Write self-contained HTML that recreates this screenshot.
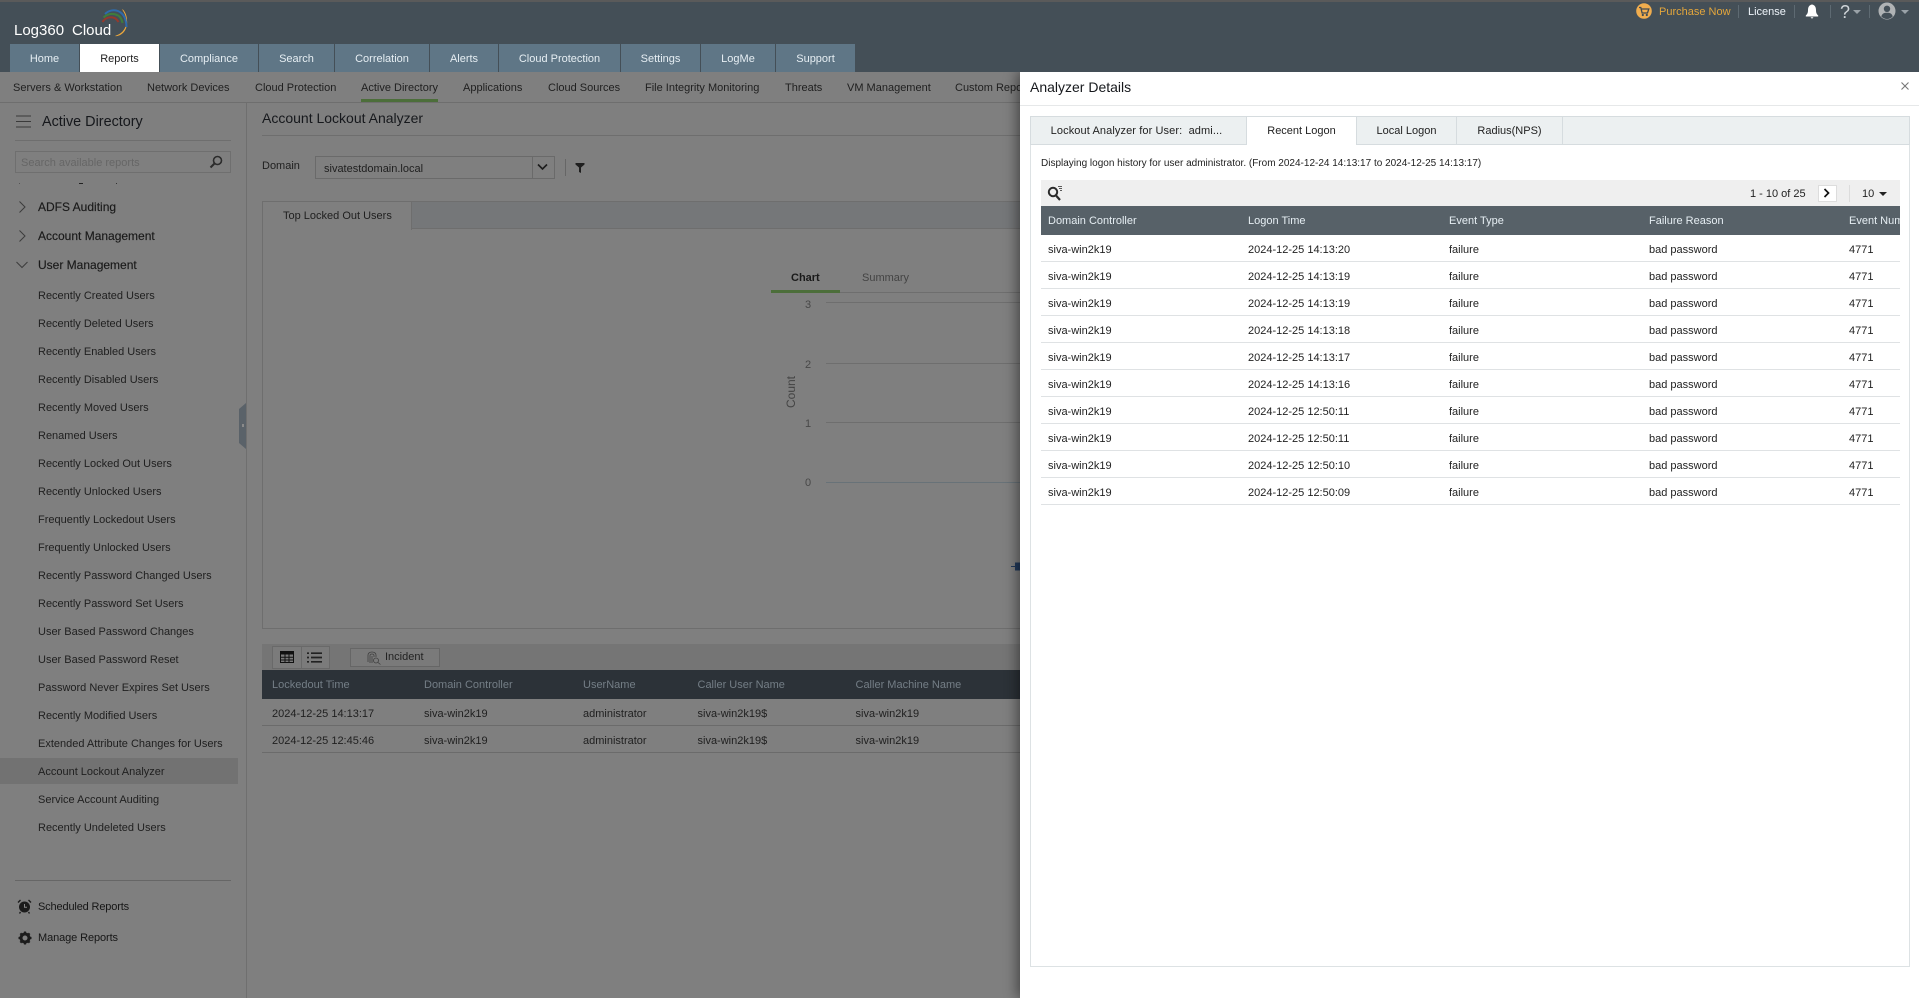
<!DOCTYPE html>
<html><head><meta charset="utf-8"><title>Account Lockout Analyzer</title>
<style>
html,body{margin:0;padding:0;width:1919px;height:998px;overflow:hidden;background:#7f7f7f;font-family:"Liberation Sans",sans-serif;font-size:11px;color:#1f1f1f}
.a{position:absolute}
.t{position:absolute;white-space:nowrap;line-height:14px}
.tab{position:absolute;top:44px;height:28px;line-height:30px;background:#5f7686;color:#e6eef3;text-align:center;font-size:11px}
.sub{top:81px}
.m{left:38px;font-size:11px;color:#202020}
.g{left:38px;font-size:12px;color:#1a1a1a;-webkit-text-stroke:.15px #1a1a1a}
.h{top:678px;color:#747e86}
.r{position:absolute;left:1041px;width:859px;height:26px;border-bottom:1px solid #dfe2e4;line-height:31px;color:#222}
.r span{position:absolute;top:0;white-space:nowrap}
.c1{left:7px}.c2{left:207px}.c3{left:408px}.c4{left:608px}.c5{left:808px}
.ln{position:absolute;left:826px;width:194px;height:1px;background:#6e6e6e}
.ptab{position:absolute;top:116px;height:29px;line-height:29px;text-align:center;color:#222;background:#ecf0f1;box-sizing:border-box;border-right:1px solid #d6dcdf;border-bottom:1px solid #d6dcdf}
</style></head><body>

<!-- Top header -->
<div class="a" style="left:0;top:0;width:1919px;height:72px;background:#444f57"></div>
<div class="a" style="left:0;top:0;width:1919px;height:1.5px;background:#5a5a5a"></div>
<svg class="a" style="left:98px;top:5px" width="36" height="34" viewBox="96 4 36 34">
<path d="M113.5 35C123 34.5 129.500 22 120.500 8.500C127 15 127 31 113.500 35Z" fill="#eda83d" stroke="#eda83d" stroke-width=".6"/>
<path d="M103 13C110 6 124 8 124.500 26" fill="none" stroke="#2f6bab" stroke-width="2"/>
<path d="M101.500 16.500C108 10.500 119 12 120.500 22" fill="none" stroke="#3f7d3c" stroke-width="2"/>
<path d="M100.500 21C104 15 113 14.500 116.500 21" fill="none" stroke="#96392c" stroke-width="2"/>
</svg>
<div class="t" style="left:14px;top:23px;font-size:15px;line-height:16px;color:#fff">Log360</div>
<div class="t" style="left:72px;top:23px;font-size:15px;line-height:16px;color:#fff">Cloud</div>

<div class="tab" style="left:10px;width:69px">Home</div>
<div class="tab" style="left:80px;width:79px;background:#fff;color:#222">Reports</div>
<div class="tab" style="left:160px;width:98px">Compliance</div>
<div class="tab" style="left:259px;width:75px">Search</div>
<div class="tab" style="left:335px;width:94px">Correlation</div>
<div class="tab" style="left:430px;width:68px">Alerts</div>
<div class="tab" style="left:499px;width:121px">Cloud Protection</div>
<div class="tab" style="left:621px;width:79px">Settings</div>
<div class="tab" style="left:701px;width:74px">LogMe</div>
<div class="tab" style="left:776px;width:79px">Support</div>

<!-- Top right -->
<svg class="a" style="left:1636px;top:3px" width="16" height="16" viewBox="0 0 16 16"><circle cx="8" cy="8" r="7.800" fill="#f0ad4e"/><path d="M3 4.500h1.800l1.300 5.500h5.400l1.300-4H5.200" fill="none" stroke="#3f4a52" stroke-width="1.300"/><circle cx="6.800" cy="12" r="1.100" fill="#3f4a52"/><circle cx="10.800" cy="12" r="1.100" fill="#3f4a52"/></svg>
<div class="t" style="left:1659px;top:5px;color:#e3a63c">Purchase Now</div>
<div class="a" style="left:1738px;top:5px;width:1px;height:13px;background:#5e6a72"></div>
<div class="t" style="left:1748px;top:5px;color:#eef4fa">License</div>
<div class="a" style="left:1794px;top:5px;width:1px;height:13px;background:#5e6a72"></div>
<svg class="a" style="left:1805px;top:4px" width="14" height="15" viewBox="0 0 14 15"><path d="M7 0.500C4 1 3 3.500 3 6C3 8.500 2.500 10 .8 11.500V12.500H13.200V11.500C11.500 10 11 8.500 11 6C11 3.500 10 1 7 .5Z" fill="#fff"/><path d="M5.500 13.300h3L7 14.800Z" fill="#fff"/></svg>
<div class="a" style="left:1830px;top:5px;width:1px;height:13px;background:#5e6a72"></div>
<div class="t" style="left:1840px;top:2px;font-size:18px;line-height:20px;color:#cfd4d8">?</div>
<div class="a" style="left:1853px;top:10px;border:4px solid transparent;border-top:4px solid #9aa2a8;border-bottom:0"></div>
<div class="a" style="left:1869px;top:5px;width:1px;height:13px;background:#5e6a72"></div>
<svg class="a" style="left:1878px;top:2px" width="18" height="18" viewBox="0 0 18 18"><circle cx="9" cy="9" r="8.500" fill="#b0b3b5"/><circle cx="9" cy="6.800" r="3.200" fill="#444f57"/><path d="M3.300 14.500C4 11.500 6 10.700 9 10.700C12 10.700 14 11.500 14.700 14.500C13 16.300 11 17 9 17C7 17 5 16.300 3.300 14.500Z" fill="#444f57"/></svg>
<div class="a" style="left:1901px;top:10px;border:4px solid transparent;border-top:4px solid #9aa2a8;border-bottom:0"></div>

<!-- Subnav -->
<div class="a" style="left:0;top:102px;width:1020px;height:1px;background:#6e6e6e"></div>
<div class="t sub" style="left:13px">Servers &amp; Workstation</div>
<div class="t sub" style="left:147px">Network Devices</div>
<div class="t sub" style="left:255px">Cloud Protection</div>
<div class="t sub" style="left:361px">Active Directory</div>
<div class="a" style="left:361px;top:99px;width:77px;height:3px;background:#4c6e3a"></div>
<div class="t sub" style="left:463px">Applications</div>
<div class="t sub" style="left:548px">Cloud Sources</div>
<div class="t sub" style="left:645px">File Integrity Monitoring</div>
<div class="t sub" style="left:785px">Threats</div>
<div class="t sub" style="left:847px">VM Management</div>
<div class="t sub" style="left:955px">Custom Reports</div>

<!-- Sidebar -->
<div class="a" style="left:246px;top:103px;width:1px;height:895px;background:#6f6f6f"></div>
<svg class="a" style="left:16px;top:115px" width="16" height="13" viewBox="0 0 16 13"><path d="M0 1h15M0 6.500h15M0 12h15" stroke="#3a3a3a" stroke-width="1"/></svg>
<div class="t" style="left:42px;top:114px;font-size:14.400px;line-height:16px;color:#16181c">Active Directory</div>
<div class="a" style="left:15px;top:140px;width:216px;height:1px;background:#6e6e6e"></div>
<div class="a" style="left:15px;top:151px;width:214px;height:20px;border:1px solid #6f6f6f"></div>
<div class="t" style="left:21px;top:155px;color:#666;margin-top:1px">Search available reports</div>
<svg class="a" style="left:209px;top:155px" width="14" height="14" viewBox="0 0 14 14"><circle cx="8.500" cy="5.500" r="4" fill="none" stroke="#2c2c2c" stroke-width="1.600"/><path d="M5.500 8.500L1.500 12.500" stroke="#2c2c2c" stroke-width="2"/></svg>
<div class="a" style="left:19px;top:183px;width:1px;height:1px;background:#555"></div>
<div class="a" style="left:79px;top:183px;width:4px;height:1px;background:#222"></div>
<div class="a" style="left:116px;top:183px;width:1px;height:1px;background:#333"></div>

<svg class="a" style="left:16px;top:200px" width="12" height="72" viewBox="0 0 12 72" fill="none" stroke="#3c3c3c" stroke-width="1"><path d="M3.500 1.500L9 7L3.500 12.500M3.500 30.500L9 36L3.500 41.500M.5 62L6 67.500L11.500 62"/></svg>
<div class="t g" style="top:200px">ADFS Auditing</div>
<div class="t g" style="top:229px">Account Management</div>
<div class="t g" style="top:258px">User Management</div>

<div class="a" style="left:0;top:758px;width:238px;height:26px;background:#727272"></div>
<div class="t m" style="top:289px">Recently Created Users</div>
<div class="t m" style="top:317px">Recently Deleted Users</div>
<div class="t m" style="top:345px">Recently Enabled Users</div>
<div class="t m" style="top:373px">Recently Disabled Users</div>
<div class="t m" style="top:401px">Recently Moved Users</div>
<div class="t m" style="top:429px">Renamed Users</div>
<div class="t m" style="top:457px">Recently Locked Out Users</div>
<div class="t m" style="top:485px">Recently Unlocked Users</div>
<div class="t m" style="top:513px">Frequently Lockedout Users</div>
<div class="t m" style="top:541px">Frequently Unlocked Users</div>
<div class="t m" style="top:569px">Recently Password Changed Users</div>
<div class="t m" style="top:597px">Recently Password Set Users</div>
<div class="t m" style="top:625px">User Based Password Changes</div>
<div class="t m" style="top:653px">User Based Password Reset</div>
<div class="t m" style="top:681px">Password Never Expires Set Users</div>
<div class="t m" style="top:709px">Recently Modified Users</div>
<div class="t m" style="top:737px">Extended Attribute Changes for Users</div>
<div class="t m" style="top:765px">Account Lockout Analyzer</div>
<div class="t m" style="top:793px">Service Account Auditing</div>
<div class="t m" style="top:821px">Recently Undeleted Users</div>

<div class="a" style="left:15px;top:880px;width:216px;height:1px;background:#666"></div>
<svg class="a" style="left:17px;top:899px" width="15" height="15" viewBox="0 0 15 15"><circle cx="7.500" cy="8" r="5.500" fill="#1c1c1c"/><path d="M7.500 5v3.300h2.500" fill="none" stroke="#888" stroke-width="1"/><path d="M1 3.500L3.500 1M14 3.500L11.500 1M3.500 13L2.500 14.500M11.500 13L12.500 14.500" stroke="#1c1c1c" stroke-width="1.400"/></svg>
<div class="t m" style="top:900px;color:#161616;letter-spacing:-.15px">Scheduled Reports</div>
<svg class="a" style="left:18px;top:931px" width="14" height="14" viewBox="0 0 14 14"><circle cx="7" cy="7" r="4" fill="none" stroke="#1c1c1c" stroke-width="3"/><path d="M7 .5v3M7 10.500v3M.5 7h3M10.500 7h3M2.400 2.400l2.100 2.100M9.500 9.500l2.100 2.100M11.600 2.400L9.500 4.500M4.500 9.500l-2.100 2.100" stroke="#1c1c1c" stroke-width="2.200"/></svg>
<div class="t m" style="top:931px;color:#161616;letter-spacing:-.1px">Manage Reports</div>

<svg class="a" style="left:239px;top:403px" width="7" height="46" viewBox="0 0 7 46"><path d="M7 0V46L0 40V6Z" fill="#5a6269"/><rect x="3" y="21" width="2" height="3" fill="#8a8a8a"/></svg>

<!-- Main content -->
<div class="t" style="left:262px;top:110px;font-size:14px;line-height:16px;color:#16181c">Account Lockout Analyzer</div>
<div class="a" style="left:262px;top:135px;width:758px;height:1px;background:#6e6e6e"></div>
<div class="t" style="left:262px;top:159px">Domain</div>
<div class="a" style="left:315px;top:156px;width:238px;height:21px;border:1px solid #6a6a6a"></div>
<div class="t" style="left:324px;top:162px">sivatestdomain.local</div>
<div class="a" style="left:532px;top:157px;width:1px;height:21px;background:#6a6a6a"></div>
<svg class="a" style="left:537px;top:163px" width="11" height="8" viewBox="0 0 11 8"><path d="M1 1.500L5.500 6L10 1.500" fill="none" stroke="#1c1c1c" stroke-width="1.600"/></svg>
<div class="a" style="left:565px;top:159px;width:1px;height:17px;background:#666"></div>
<svg class="a" style="left:575px;top:163px" width="10" height="10" viewBox="0 0 10 10"><path d="M.5 0H9.500V1.500L6 4.500V10L4 9V4.500L.5 1.500Z" fill="#1f1f1f"/></svg>

<div class="a" style="left:262px;top:201px;width:758px;height:28px;background:#757779;border-top:1px solid #6e6e6e;border-bottom:1px solid #6e6e6e;box-sizing:border-box"></div>
<div class="a" style="left:262px;top:201px;width:150px;height:29px;background:#7f7f7f;border-top:1px solid #6e6e6e;border-left:1px solid #6e6e6e;border-right:1px solid #6e6e6e;box-sizing:border-box"></div>
<div class="t" style="left:283px;top:209px">Top Locked Out Users</div>
<div class="a" style="left:262px;top:201px;width:1px;height:427px;background:#6e6e6e"></div>
<div class="a" style="left:262px;top:628px;width:758px;height:1px;background:#6e6e6e"></div>

<div class="t" style="left:791px;top:271px;font-weight:bold;color:#1a1a1a">Chart</div>
<div class="t" style="left:862px;top:271px;color:#444">Summary</div>
<div class="a" style="left:771px;top:292px;width:249px;height:1px;background:#6e6e6e"></div>
<div class="a" style="left:771px;top:290px;width:69px;height:3px;background:#4c6e3a"></div>
<div class="t" style="left:805px;top:298px;color:#484848">3</div>
<div class="t" style="left:805px;top:358px;color:#484848">2</div>
<div class="t" style="left:805px;top:417px;color:#484848">1</div>
<div class="t" style="left:805px;top:476px;color:#484848">0</div>
<div class="ln" style="top:302px"></div><div class="ln" style="top:363px"></div><div class="ln" style="top:422px"></div><div class="ln" style="top:482px;background:#687278"></div>
<div class="t" style="left:771px;top:385px;width:40px;text-align:center;font-size:12px;color:#444;transform:rotate(-90deg)">Count</div>
<svg class="a" style="left:1011px;top:562px" width="9" height="9" viewBox="0 0 9 9"><path d="M0 4h4V0.500h5V8.500H4V5H0Z" fill="#223a5c"/></svg>

<!-- Toolbar + table -->
<div class="a" style="left:262px;top:644px;width:758px;height:26px;background:#757575"></div>
<div class="a" style="left:272px;top:646px;width:56px;height:21px;border:1px solid #696969;background:#7b7b7b"></div>
<div class="a" style="left:301px;top:647px;width:1px;height:21px;background:#696969"></div>
<svg class="a" style="left:280px;top:651px" width="14" height="12" viewBox="0 0 14 12"><rect x=".5" y=".5" width="13" height="11" fill="none" stroke="#111" stroke-width="1"/><path d="M0 1h14v2H0zM.5 6.300h13M.5 9h13M5 2v10M9 2v10" stroke="#111" stroke-width="1" fill="#111"/></svg>
<svg class="a" style="left:307px;top:652px" width="15" height="11" viewBox="0 0 15 11"><path d="M0 1.200h2M4 1.200h11M0 5.500h2M4 5.500h11M0 9.800h2M4 9.800h11" stroke="#222" stroke-width="1.700"/></svg>
<div class="a" style="left:350px;top:648px;width:88px;height:17px;border:1px solid #666;background:#7a7a7a"></div>
<svg class="a" style="left:366px;top:650px" width="15" height="15" viewBox="0 0 15 15" fill="none" stroke="#3f3f3f" stroke-width=".8"><path d="M2 12V5C2 1 10 1 10 5V7M4 13V5.500C4 3.500 8 3.500 8 5.500V7M6 13V6"/><circle cx="10" cy="10.500" r="2.500"/><path d="M12 12.500L14.500 14.500"/></svg>
<div class="t" style="left:385px;top:650px;color:#222">Incident</div>
<div class="a" style="left:262px;top:670px;width:758px;height:29px;background:#2c3238"></div>
<div class="t h" style="left:272px">Lockedout Time</div>
<div class="t h" style="left:424px">Domain Controller</div>
<div class="t h" style="left:583px">UserName</div>
<div class="t h" style="left:697.500px">Caller User Name</div>
<div class="t h" style="left:855.500px">Caller Machine Name</div>
<div class="t" style="left:272px;top:707px">2024-12-25 14:13:17</div>
<div class="t" style="left:424px;top:707px">siva-win2k19</div>
<div class="t" style="left:583px;top:707px">administrator</div>
<div class="t" style="left:697.500px;top:707px">siva-win2k19$</div>
<div class="t" style="left:855.500px;top:707px">siva-win2k19</div>
<div class="a" style="left:262px;top:725px;width:758px;height:1px;background:#6b6b6b"></div>
<div class="t" style="left:272px;top:734px">2024-12-25 12:45:46</div>
<div class="t" style="left:424px;top:734px">siva-win2k19</div>
<div class="t" style="left:583px;top:734px">administrator</div>
<div class="t" style="left:697.500px;top:734px">siva-win2k19$</div>
<div class="t" style="left:855.500px;top:734px">siva-win2k19</div>
<div class="a" style="left:262px;top:752px;width:758px;height:1px;background:#6b6b6b"></div>

<!-- Panel -->
<div class="a" style="left:1020px;top:72px;width:899px;height:926px;background:#fff;box-shadow:-3px 0 12px rgba(0,0,0,.45);clip-path:inset(0 0 0 -20px)"></div>
<div class="t" style="left:1030px;top:79px;font-size:14px;line-height:16px;color:#16181c">Analyzer Details</div>
<svg class="a" style="left:1900px;top:81px" width="10" height="10" viewBox="0 0 10 10"><path d="M1.500 1.500L8.500 8.500M8.500 1.500L1.500 8.500" stroke="#777" stroke-width="1.100"/></svg>
<div class="a" style="left:1020px;top:105px;width:899px;height:1px;background:#e6e8e9"></div>

<div class="a" style="left:1030px;top:116px;width:880px;height:851px;box-sizing:border-box;border:1px solid #dde2e4"></div>
<div class="a" style="left:1030px;top:116px;width:880px;height:29px;background:#ecf0f1;box-sizing:border-box;border:1px solid #d6dcdf"></div>
<div class="ptab" style="left:1030px;width:217px;padding-right:4px;border-left:1px solid #d6dcdf;border-top:1px solid #d6dcdf;letter-spacing:.1px">Lockout Analyzer for User:&nbsp; admi...</div>
<div class="ptab" style="left:1247px;width:110px;background:#fff;border-bottom:0;border-top:1px solid #d6dcdf">Recent Logon</div>
<div class="ptab" style="left:1357px;width:100px;border-top:1px solid #d6dcdf">Local Logon</div>
<div class="ptab" style="left:1457px;width:106px;border-top:1px solid #d6dcdf">Radius(NPS)</div>
<div class="t" style="left:1041px;top:155px;margin-top:2px;font-size:10px;color:#222">Displaying logon history for user administrator. (From 2024-12-24 14:13:17 to 2024-12-25 14:13:17)</div>

<div class="a" style="left:1041px;top:180px;width:859px;height:26px;background:#efefef"></div>
<svg class="a" style="left:1047px;top:185px" width="16" height="16" viewBox="0 0 16 16"><circle cx="6" cy="7" r="4.200" fill="none" stroke="#2b2b2b" stroke-width="2"/><path d="M9 10.500L13 15" stroke="#2b2b2b" stroke-width="2.200"/><path d="M11 1.500h4M12 3.500h3M13 5.500h2" stroke="#2b2b2b" stroke-width=".8"/></svg>
<div class="t" style="left:1750px;top:187px;color:#222">1 - 10 of 25</div>
<div class="a" style="left:1818px;top:185px;width:17px;height:15px;background:#fff;border:1px solid #ddd"></div>
<svg class="a" style="left:1823px;top:188px" width="8" height="10" viewBox="0 0 8 10"><path d="M1.500 1L5.500 5L1.500 9" fill="none" stroke="#111" stroke-width="1.700"/></svg>
<div class="a" style="left:1849px;top:185px;width:1px;height:17px;background:#dcdcdc"></div>
<div class="t" style="left:1862px;top:187px;color:#222">10</div>
<div class="a" style="left:1879px;top:192px;border:4px solid transparent;border-top:4px solid #222;border-bottom:0"></div>

<div class="a" style="left:1041px;top:206px;width:859px;height:29px;background:#576168;overflow:hidden;color:#e6eef3;line-height:31px">
<span class="a c1" style="white-space:nowrap">Domain Controller</span><span class="a c2" style="white-space:nowrap">Logon Time</span><span class="a c3" style="white-space:nowrap">Event Type</span><span class="a c4" style="white-space:nowrap">Failure Reason</span><span class="a c5" style="white-space:nowrap">Event Number</span></div>

<div class="r" style="top:235px"><span class="c1">siva-win2k19</span><span class="c2">2024-12-25 14:13:20</span><span class="c3">failure</span><span class="c4">bad password</span><span class="c5">4771</span></div>
<div class="r" style="top:262px"><span class="c1">siva-win2k19</span><span class="c2">2024-12-25 14:13:19</span><span class="c3">failure</span><span class="c4">bad password</span><span class="c5">4771</span></div>
<div class="r" style="top:289px"><span class="c1">siva-win2k19</span><span class="c2">2024-12-25 14:13:19</span><span class="c3">failure</span><span class="c4">bad password</span><span class="c5">4771</span></div>
<div class="r" style="top:316px"><span class="c1">siva-win2k19</span><span class="c2">2024-12-25 14:13:18</span><span class="c3">failure</span><span class="c4">bad password</span><span class="c5">4771</span></div>
<div class="r" style="top:343px"><span class="c1">siva-win2k19</span><span class="c2">2024-12-25 14:13:17</span><span class="c3">failure</span><span class="c4">bad password</span><span class="c5">4771</span></div>
<div class="r" style="top:370px"><span class="c1">siva-win2k19</span><span class="c2">2024-12-25 14:13:16</span><span class="c3">failure</span><span class="c4">bad password</span><span class="c5">4771</span></div>
<div class="r" style="top:397px"><span class="c1">siva-win2k19</span><span class="c2">2024-12-25 12:50:11</span><span class="c3">failure</span><span class="c4">bad password</span><span class="c5">4771</span></div>
<div class="r" style="top:424px"><span class="c1">siva-win2k19</span><span class="c2">2024-12-25 12:50:11</span><span class="c3">failure</span><span class="c4">bad password</span><span class="c5">4771</span></div>
<div class="r" style="top:451px"><span class="c1">siva-win2k19</span><span class="c2">2024-12-25 12:50:10</span><span class="c3">failure</span><span class="c4">bad password</span><span class="c5">4771</span></div>
<div class="r" style="top:478px"><span class="c1">siva-win2k19</span><span class="c2">2024-12-25 12:50:09</span><span class="c3">failure</span><span class="c4">bad password</span><span class="c5">4771</span></div>
</body></html>
